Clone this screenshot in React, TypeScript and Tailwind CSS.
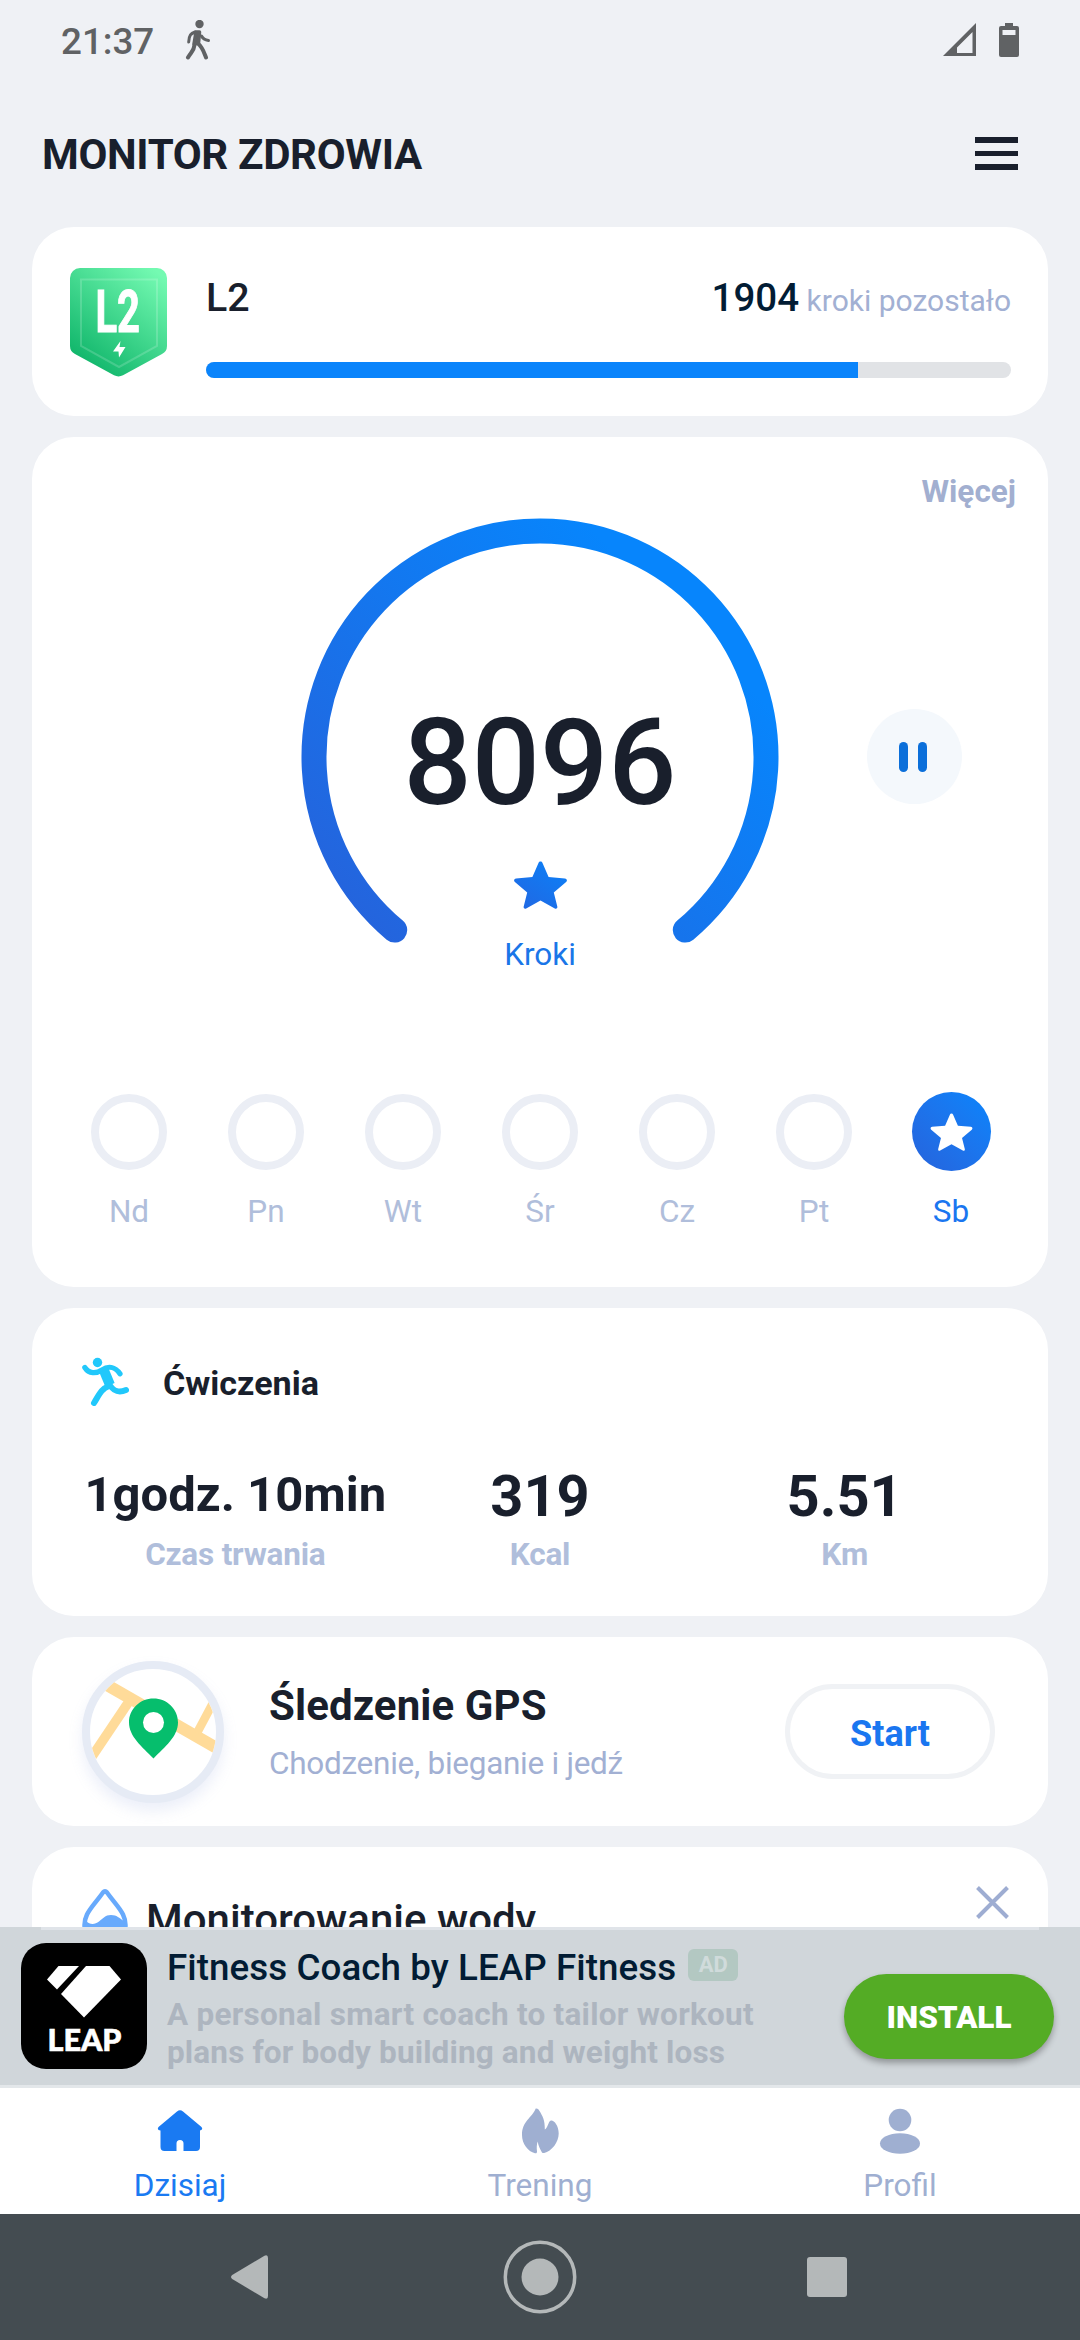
import type { ReactNode } from 'react'
import clsx from 'clsx'

const days = ['Nd', 'Pn', 'Wt', 'Śr', 'Cz', 'Pt', 'Sb']

const stats = [
  { value: '1godz. 10min', label: 'Czas trwania', small: true },
  { value: '319', label: 'Kcal' },
  { value: '5.51', label: 'Km' },
]

const STAR =
  'M26.5 0.5c.9 0 1.6.5 1.9 1.300l6.200 14.200 16.300 1.500c2 .2 2.700 2.200 1.200 3.500l-12.300 10.500 3.500 14c.4 1.800-1 2.700-2.500 1.900l-14.300-7.900-14.300 7.900c-1.500.8-2.900-.1-2.500-1.900l3.500-14-12.300-10.500c-1.500-1.300-.8-3.300 1.200-3.500l16.300-1.500 6.200-14.200c.3-.8 1-1.300 1.900-1.300z'

function Card({ className, children }: { className?: string; children: ReactNode }) {
  return <section className={clsx('shrink-0 rounded-[42px] bg-white', className)}>{children}</section>
}

function StatusBar() {
  return (
    <div className="flex h-20 shrink-0 items-start pr-[61px] pl-[61px] pt-5 text-[#606264]">
      <span className="text-[36.750px] leading-[43px] font-medium">21:37</span>
      <svg
        className="ml-[31px]"
        width="26"
        height="40"
        viewBox="0 0 26 40"
        fill="none"
        stroke="currentColor"
        strokeWidth="3.500"
        strokeLinecap="round"
        strokeLinejoin="round"
      >
        <circle cx="14.500" cy="4" r="4.200" fill="currentColor" stroke="none" />
        <path d="M10 12c-4 1.500-6 3-6.300 10M16.500 16c1.500 3 4 4 7 4.500" strokeWidth="3" />
        <path d="M11 12h3.500l-1 11-4.500 1z" fill="currentColor" />
        <path d="M9.500 25C9 31 6 32 3 37.500M12.500 23c5 4 6 8 8.500 14.500" strokeWidth="4" />
      </svg>
      <svg className="mt-[3px] ml-auto" width="33" height="34" viewBox="0 0 33 34" fill="currentColor">
        <path fillRule="evenodd" d="M33 0v33H0zM29.500 9 14 24.500V30h15.500z" />
      </svg>
      <svg className="mt-[3px] ml-[23px]" width="20" height="34" viewBox="0 0 20 34" fill="currentColor">
        <path
          fillRule="evenodd"
          d="M6 0h8v3h4a2 2 0 0 1 2 2v27a2 2 0 0 1-2 2H2a2 2 0 0 1-2-2V5a2 2 0 0 1 2-2h4zM3.500 7v5h13V7z"
        />
      </svg>
    </div>
  )
}

function Header() {
  return (
    <header className="flex h-[147px] shrink-0 items-start justify-between pr-[62px] pl-[42px]">
      <h1 className="mt-[50px] text-[42px] leading-[50px] font-bold tracking-[-0.35px]">MONITOR ZDROWIA</h1>
      <div className="mt-[57px] flex w-[43px] flex-col gap-[8px]">
        <div className="h-[5.500px] bg-[#191f2c]" />
        <div className="h-[5.500px] bg-[#191f2c]" />
        <div className="h-[5.500px] bg-[#191f2c]" />
      </div>
    </header>
  )
}

function LevelBadge() {
  return (
    <svg width="97" height="109" viewBox="0 0 97 109">
      <defs>
        <linearGradient id="badge" x1="0.85" y1="0" x2="0.2" y2="0.9">
          <stop offset="0" stopColor="#74fab2" />
          <stop offset="1" stopColor="#12b76c" />
        </linearGradient>
      </defs>
      <path
        d="M10 0h77a10 10 0 0 1 10 10v68a9 9 0 0 1-5 8L53 107.300q-4.500 2.200-9 0L5 86a9 9 0 0 1-5-8V10A10 10 0 0 1 10 0z"
        fill="url(#badge)"
      />
      <path d="M11 11.500h76v66.500L49 99 11 78z" fill="none" stroke="#fff" strokeOpacity=".17" strokeWidth="2" />
      <text
        x="25.500"
        y="63.500"
        fill="#fff"
        stroke="#fff"
        strokeWidth="1"
        fontSize="59"
        fontWeight="700"
        textLength="44.500"
        lengthAdjust="spacingAndGlyphs"
      >
        L2
      </text>
      <path d="M50.500 73 43 83.500h5.500L49 89.500l6.500-10.500h-6z" fill="#fff" />
    </svg>
  )
}

function LevelCard() {
  return (
    <Card className="flex h-[189px] pr-[37px] pl-[38px]">
      <div className="mt-[41px]">
        <LevelBadge />
      </div>
      <div className="ml-[39px] flex-1 pt-[48px]">
        <div className="flex h-[46px] items-baseline justify-between leading-[46px]">
          <span className="text-[39.400px] font-medium">L2</span>
          <span className="text-[30px] text-[#a2b0d3]">
            <span className="text-[38.500px] font-medium text-[#021c34]">1904</span> kroki pozostało
          </span>
        </div>
        <div className="mt-[41px] h-4 overflow-hidden rounded-full bg-[#e1e3e6]">
          <div className="h-full w-[652px] bg-[#0a84fb]" />
        </div>
      </div>
    </Card>
  )
}

function StepsCard() {
  return (
    <Card className="h-[850px] pt-[35px]">
      <div className="pr-8 text-right text-[31.500px] leading-10 font-bold text-[#a2afd0]">Więcej</div>

      <div className="mt-[6px] grid grid-cols-[1fr_478px_1fr]">
        <div className="col-start-2 grid">
          <svg className="col-start-1 row-start-1" width="478" height="426" viewBox="0 0 478 426">
            <defs>
              <linearGradient id="ring" gradientUnits="userSpaceOnUse" x1="60" y1="420" x2="380" y2="100">
                <stop offset="0" stopColor="#2563dc" />
                <stop offset="1" stopColor="#0785fc" />
              </linearGradient>
            </defs>
            <path
              d="M93.700 412.100A226 226 0 1 1 384.300 412.100"
              fill="none"
              stroke="url(#ring)"
              strokeWidth="25"
              strokeLinecap="round"
            />
          </svg>
          <div className="col-start-1 row-start-1 flex flex-col items-center pt-[185px]">
            <span className="text-[120px] leading-[120px] font-medium">8096</span>
            <svg className="mt-[38px]" width="53" height="48" viewBox="0 0 53 48">
              <defs>
                <linearGradient id="star" x1="0.1" y1="1" x2="0.9" y2="0">
                  <stop offset="0" stopColor="#2168e3" />
                  <stop offset="1" stopColor="#0c80f7" />
                </linearGradient>
              </defs>
              <path d={STAR} fill="url(#star)" />
            </svg>
            <span className="mt-[26px] text-[31.500px] leading-10 text-[#1a76e8]">Kroki</span>
          </div>
        </div>
        <button className="mt-[191px] ml-[88px] flex size-[95px] items-center justify-center gap-[10px] rounded-full bg-[#f4f8fc] pr-1">
          <span className="h-[30px] w-[9px] rounded-full bg-[#0b6fda]" />
          <span className="h-[30px] w-[9px] rounded-full bg-[#0b6fda]" />
        </button>
      </div>

      <div className="mt-[117px] grid grid-cols-7 px-[28.500px]">
        {days.map((day) => {
          const done = day === 'Sb'
          return (
            <div key={day} className="flex flex-col items-center">
              <div className="flex h-[79px] items-center justify-center">
                {done ? (
                  <div className="flex size-[79px] items-center justify-center rounded-full bg-linear-to-tr from-[#2563dc] to-[#0785fc]">
                    <svg width="43" height="38" viewBox="0 0 53 48" fill="#fff">
                      <path d={STAR} />
                    </svg>
                  </div>
                ) : (
                  <div className="size-[76px] rounded-full border-8 border-[#ebeef5]" />
                )}
              </div>
              <span
                className={clsx(
                  'mt-[21px] text-[31.500px] leading-10',
                  done ? 'text-[#1a76f0]' : 'text-[#b0bedb]'
                )}
              >
                {day}
              </span>
            </div>
          )
        })}
      </div>
    </Card>
  )
}

function ExerciseCard() {
  return (
    <Card className="h-[308px] pt-[49px]">
      <div className="flex h-[49px] pl-[50px]">
        <svg width="47" height="49" viewBox="0 0 47 49" fill="none" stroke="#21c8fb" strokeLinecap="round">
          <circle cx="15.500" cy="5.500" r="4.700" fill="#21c8fb" stroke="none" />
          <path d="M2.800 10.500C7 17 14 17 20 12.800c6-4 13-3.500 18 4" strokeWidth="5.200" />
          <path d="M22 13.500 28 28" strokeWidth="10" strokeLinecap="butt" />
          <path d="M27 29c-8 3-10 9-15 17" strokeWidth="6" />
          <path d="M27 27c5 8 10 9 17 6" strokeWidth="6" />
        </svg>
        <h2 className="mt-[6px] ml-[34px] text-[34.100px] leading-10 font-bold">Ćwiczenia</h2>
      </div>
      <div className="mt-[60px] grid grid-cols-3 px-[51px] text-center whitespace-nowrap">
        {stats.map((stat) => (
          <div key={stat.label} className="flex flex-col">
            <span
              className={clsx(
                'h-[69px] leading-[60px] font-bold',
                stat.small ? '-mt-px mb-px text-[49px]' : 'text-[57.750px]'
              )}
            >
              {stat.value}
            </span>
            <span className="text-[31.500px] leading-10 font-bold tracking-[-0.2px] text-[#b0bedb]">
              {stat.label}
            </span>
          </div>
        ))}
      </div>
    </Card>
  )
}

function GpsCard() {
  return (
    <Card className="flex h-[189px] items-start pr-[53px] pl-[50px]">
      <div className="mt-6 size-[142px] overflow-hidden rounded-full border-8 border-[#e6ebf5] bg-white shadow-[0_8px_14px_rgba(150,165,220,0.18)]">
        <svg width="126" height="126" viewBox="0 0 126 126">
          <g stroke="#ffdb99" fill="none">
            <path d="M10 12 132 82" strokeWidth="12" />
            <path d="M40 31-3 95" strokeWidth="9.500" />
            <path d="M124 32 107 64" strokeWidth="8.500" />
          </g>
          <path
            fill="#06be6d"
            d="M63.500 29.500c13.500 0 24.500 10.500 24.500 24 0 14-13 24-24.500 36-11.500-12-24.500-22-24.500-36 0-13.500 11-24 24.500-24z"
          />
          <circle cx="63.500" cy="53.500" r="10.500" fill="#fff" />
        </svg>
      </div>
      <div className="mt-[44px] ml-[45px]">
        <h2 className="text-[42px] leading-[50px] font-bold tracking-[0.1px]">Śledzenie GPS</h2>
        <p className="mt-[13px] text-[31.500px] leading-10 tracking-[-0.27px] text-[#a2b0d3]">
          Chodzenie, bieganie i jedź
        </p>
      </div>
      <button className="mt-[47px] ml-auto h-[95px] w-[210px] rounded-full border-[5px] border-[#f0f2f5] pt-1 text-[36px] font-bold text-[#1a76f0]">
        Start
      </button>
    </Card>
  )
}

function WaterCard() {
  return (
    <Card className="flex h-[240px] items-start pr-[39px] pl-[49px]">
      <svg className="mt-[41px]" width="48" height="58" viewBox="0 0 48 58">
        <path
          d="M22 4.500C16 13 9 20 6 26.500 4.300 30 3.500 33 3.500 37a20.500 20.500 0 0 0 41 0c0-4-.8-7-2.500-10.500C39 20 32 13 26 4.500q-2-2.500-4 0z"
          fill="none"
          stroke="#68aafc"
          strokeWidth="4.500"
        />
        <path d="M5 33c4 4 9 3.500 13 .5s6-6.500 12-6.500 8 3 13 6l1 4c0 10-9 19-20 19S4 47 4 37z" fill="#68aafc" />
      </svg>
      <h2 className="mt-[48px] ml-[17px] text-[42px] leading-[50px] font-medium">Monitorowanie wody</h2>
      <svg className="mt-[39px] ml-auto" width="33" height="33" viewBox="0 0 33 33" stroke="#9eadd2" strokeWidth="4">
        <path d="M1.500 1.500l30 30M31.500 1.500l-30 30" />
      </svg>
    </Card>
  )
}

function AdBanner() {
  return (
    <aside className="relative flex h-[161px] shrink-0 items-start border-b-[3px] border-[#e3e7ea] bg-[#d0d6da] pr-[26px] pl-[21px]">
      <div className="absolute inset-x-[41px] top-0 h-[3px] bg-[#e0e4e9]" />
      <svg className="mt-4 shrink-0" width="126" height="126" viewBox="0 0 126 126">
        <rect width="126" height="126" rx="25" />
        <g fill="#fff">
          <path d="M37.500 23H58L36 46.500 26 36.500z" />
          <path d="M65 23h23.500L100 36.500l-37 38L40 51z" />
          <text
            x="26.500"
            y="108"
            fontFamily="Lato, sans-serif"
            fontSize="31"
            fontWeight="900"
            stroke="#fff"
            strokeWidth=".6"
            textLength="74"
            lengthAdjust="spacingAndGlyphs"
          >
            LEAP
          </text>
        </g>
      </svg>
      <div className="mt-[19px] ml-[20px] whitespace-nowrap">
        <div className="flex h-[44px] items-start">
          <span className="text-[36.750px] leading-[44px] font-medium tracking-[0.07px] text-[#021c34]">
            Fitness Coach by LEAP Fitness
          </span>
          <span className="mt-[3px] ml-[12px] h-8 w-[50px] rounded-md bg-[#b3c8c2] text-center text-[22px] leading-8 font-bold text-[#d0dbdb]">
            AD
          </span>
        </div>
        <p className="mt-[6px] text-[31.500px] leading-[37.500px] font-bold text-[#adb5bf]">
          <span className="block tracking-[0.26px]">A personal smart coach to tailor workout</span>
          <span className="block tracking-[0.14px]">plans for body building and weight loss</span>
        </p>
      </div>
      <button className="mt-[47px] ml-auto h-[85px] w-[210px] rounded-full bg-[#54ac25] pt-[3px] text-[31.500px] font-black text-white shadow-[0_4px_6px_rgba(0,0,0,0.3)]">
        INSTALL
      </button>
    </aside>
  )
}

function TabBar() {
  const tabs = [
    {
      label: 'Dzisiaj',
      active: true,
      icon: (
        <path d="M20 3.500q3-2.500 6 0L44.500 19q2 3-1.500 3.500V39q0 4-4 4H26.500V35.500a3.500 3.500 0 0 0-7 0V43H7.500q-4 0-4-4V22.500Q-.5 22 1.500 19z" />
      ),
    },
    {
      label: 'Trening',
      icon: (
        <path d="M18.700.5C20.500.3 21.500 1 22.500 3c3 5 5.500 9 5.300 18.500C31 20 31 13.500 34 12.500c3-.5 7.700 5 7.700 13 0 9-7 17.500-14.500 19.500-1.500.3-2 0-2.500-1-1.500-3-3.500-6-4-10.500-1 3-1.200 6-.7 10 0 1.500-.5 2-2 1.700C11 43.500 5 36 5 27 5 13 15 10 18.700.5z" />
      ),
    },
    {
      label: 'Profil',
      icon: (
        <>
          <circle cx="23" cy="12" r="11.300" />
          <ellipse cx="23" cy="35.500" rx="20" ry="10.300" />
        </>
      ),
    },
  ]
  return (
    <nav className="grid h-[126px] shrink-0 grid-cols-3 bg-white pt-5">
      {tabs.map((tab) => (
        <div
          key={tab.label}
          className={clsx('flex flex-col items-center', tab.active ? 'text-[#1a7af2]' : 'text-[#9fafd1]')}
        >
          <svg width="46" height="46" viewBox="0 0 46 46" fill="currentColor">
            {tab.icon}
          </svg>
          <span className="mt-3 text-[31.500px] leading-10">{tab.label}</span>
        </div>
      ))}
    </nav>
  )
}

function SystemNav() {
  return (
    <div className="flex h-[126px] shrink-0 items-center justify-between bg-[#444c51] pr-[233px] pl-[231px] text-[#b4b8b9]">
      <svg width="37" height="44" viewBox="0 0 37 44" fill="currentColor">
        <path d="M33.500.7Q37-.8 37 3v38q0 3.800-3.500 2.300L1.200 24q-2.400-2 0-4z" />
      </svg>
      <svg className="ml-[5px]" width="74" height="74" viewBox="0 0 74 74">
        <circle cx="37" cy="37" r="34.700" fill="none" stroke="currentColor" strokeWidth="3.500" />
        <circle cx="37" cy="37" r="18.500" fill="currentColor" />
      </svg>
      <div className="size-10 rounded-[3px] bg-current" />
    </div>
  )
}

export default function App() {
  return (
    <div className="flex h-[2340px] w-[1080px] flex-col overflow-hidden bg-[#eff1f5] font-[Roboto,sans-serif] text-[#191f2c]">
      <StatusBar />
      <Header />
      <main className="flex min-h-0 flex-1 flex-col gap-[21px] overflow-hidden px-8">
        <LevelCard />
        <StepsCard />
        <ExerciseCard />
        <GpsCard />
        <WaterCard />
      </main>
      <AdBanner />
      <TabBar />
      <SystemNav />
    </div>
  )
}
